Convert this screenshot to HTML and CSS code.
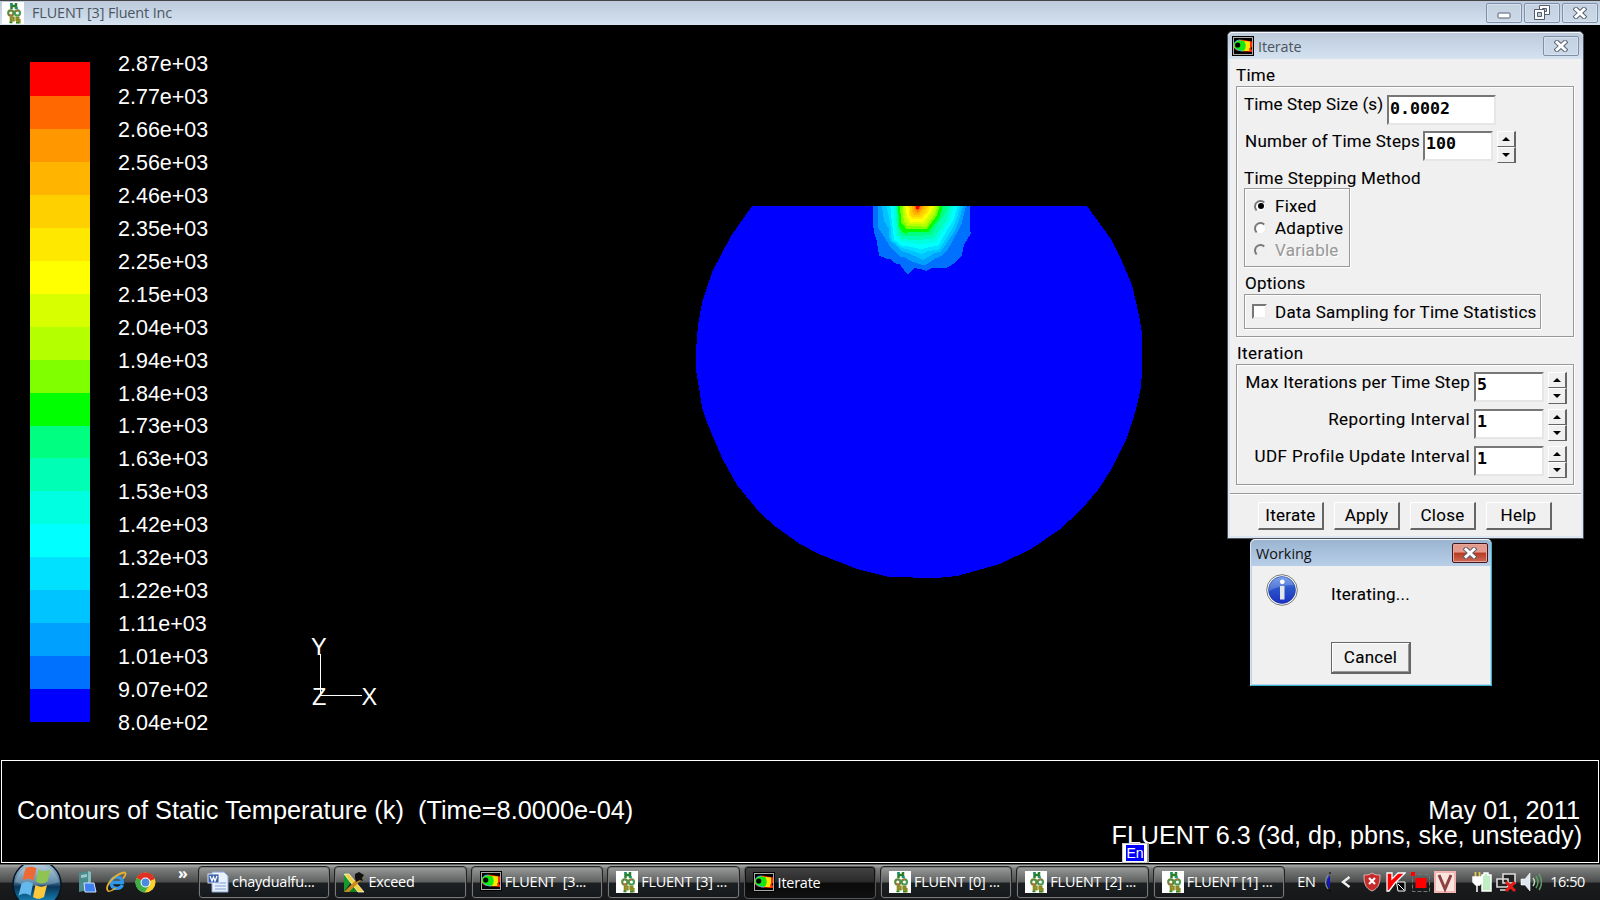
FILE: index.html
```html
<!DOCTYPE html>
<html lang="en">
<head>
<meta charset="utf-8">
<title>FLUENT [3] Fluent Inc</title>
<link rel="stylesheet" href="styles.css">
</head>
<body>
<svg class="defs" width="0" height="0" aria-hidden="true">
  <defs>
    <linearGradient id="orbTop" x1="0" y1="0" x2="0" y2="1"><stop offset="0" stop-color="#b9d3e4"/><stop offset=".45" stop-color="#3f6f92"/><stop offset=".55" stop-color="#0b3558"/><stop offset="1" stop-color="#19a6e0"/></linearGradient>
    <linearGradient id="infoFill" x1="0" y1="0" x2="0" y2="1"><stop offset="0" stop-color="#5a8be6"/><stop offset=".45" stop-color="#2a55c8"/><stop offset="1" stop-color="#1c2fc4"/></linearGradient>
    <symbol id="hoops" viewBox="0 0 22 22">
      <rect width="22" height="22" fill="#fff"/>
      <path d="M9.500 1v6M14 1v6M9.500 4h5" stroke="#2f7d2a" stroke-width="2.500" fill="none"/>
      <path d="M8 2.500h3M13 6h3" stroke="#159a8a" stroke-width="1.500"/>
      <ellipse cx="8.800" cy="11" rx="2.600" ry="2.600" fill="none" stroke="#5d8a3a" stroke-width="2.100"/>
      <ellipse cx="15.400" cy="11" rx="2.600" ry="2.600" fill="none" stroke="#4b9a50" stroke-width="2.100"/>
      <path d="M7 13l4 1M13.500 9l3-1" stroke="#b86a30" stroke-width="1.500"/>
      <path d="M8.800 21v-5.500h2.800v2.800H9M17.500 15.800h-3v2.200h3v2.400h-3.500" fill="none" stroke="#8a8a20" stroke-width="2.200"/>
      <path d="M7.500 20.500h3M14 20.500h3" stroke="#1c8d30" stroke-width="1.300"/>
    </symbol>
    <symbol id="fluent" viewBox="0 0 22 20">
      <rect width="22" height="20" fill="#000"/>
      <rect x="1.500" y="1.500" width="19" height="17" fill="#000" stroke="#aaa" stroke-width="1"/>
      <path d="M2 9C3 4 8 3.500 12 4l8 1.500V11l-1.500 1L20 14v2C14 15.500 7 16 4 14 2 13 2 11 2 9z" fill="#ff2a00"/>
      <path d="M2 9C3 4 8 4 12 5l6 .5V12l-1 .5.500 2.500C12 15 7 15 4 13 2 12 2 11 2 9z" fill="#ffe600"/>
      <path d="M2 9c1-4 6-4.500 10-4 2 2 2.500 7 0 9.500C7 14.500 2 13 2 9z" fill="#12e812"/>
      <path d="M2.500 7c1-2 3-3 6-3M3 12c2 2 5 3 8 3" fill="none" stroke="#00c8e8"/>
      <circle cx="5.700" cy="9" r="2.600" fill="#000"/>
    </symbol>
    <symbol id="cross" viewBox="0 0 14 12">
      <path d="M3 2.300l8 7.400M11 2.300l-8 7.400" stroke="#555d6c" stroke-width="4.800" stroke-linecap="square"/>
      <path d="M3 2.300l8 7.400M11 2.300l-8 7.400" stroke="#fff" stroke-width="2.900" stroke-linecap="square"/>
    </symbol>
  </defs>
</svg>

<header class="titlebar">
  <svg class="title-icon" width="22" height="22"><use href="#hoops"/></svg>
  <span class="title-text">FLUENT [3] Fluent Inc</span>
  <div class="caption-buttons">
    <span class="cap"><svg width="14" height="12" viewBox="0 0 14 12"><rect x="1" y="6" width="12" height="5" rx="1" fill="#fff" stroke="#555d6c"/></svg></span>
    <span class="cap"><svg width="16" height="15" viewBox="0 0 16 15"><path d="M5.500.5h10v9h-10z" fill="#fff" stroke="#555d6c"/><path d="M8.500 3.500h4v3h-4z" fill="#bcc9da" stroke="#555d6c"/><path d="M.5 4.500h10v10H.5z" fill="#fff" stroke="#555d6c"/><path d="M3.500 7.500h4v4h-4z" fill="#bcc9da" stroke="#555d6c"/></svg></span>
    <span class="cap"><svg width="14" height="12"><use href="#cross"/></svg></span>
  </div>
</header>

<main class="viewport">
  <section class="plot">
    <div class="scale">
      <i class="c20"></i><i class="c19"></i><i class="c18"></i><i class="c17"></i><i class="c16"></i><i class="c15"></i><i class="c14"></i><i class="c13"></i><i class="c12"></i><i class="c11"></i><i class="c10"></i><i class="c9"></i><i class="c8"></i><i class="c7"></i><i class="c6"></i><i class="c5"></i><i class="c4"></i><i class="c3"></i><i class="c2"></i><i class="c1"></i>
    </div>
    <div class="values">
      <span>2.87e+03</span><span>2.77e+03</span><span>2.66e+03</span><span>2.56e+03</span><span>2.46e+03</span><span>2.35e+03</span><span>2.25e+03</span><span>2.15e+03</span><span>2.04e+03</span><span>1.94e+03</span><span>1.84e+03</span><span>1.73e+03</span><span>1.63e+03</span><span>1.53e+03</span><span>1.42e+03</span><span>1.32e+03</span><span>1.22e+03</span><span>1.11e+03</span><span>1.01e+03</span><span>9.07e+02</span><span>8.04e+02</span>
    </div>
    <svg class="field" width="1300" height="735" viewBox="300 25 1300 735">
      <g shape-rendering="crispEdges">
        <polygon fill="#00f" points="752,206 1087,206 1111,239 1121,259 1132,285 1139,315 1142,333 1142,370 1141,388 1137,405 1133,420 1126,440 1111,470 1098,490 1081,510 1059,530 1031,549 1000,564 957,576 937,578 889,577 857,569 819,554 800,544 776,527 760,513 737,485 722,458 711,432 706,420 702,407 699,388 696,370 696,350 698,325 702,303 712,272 731,236"/>
        <g transform="translate(680 190) scale(.33333)">
          <polygon fill="#0070ff" points="579,48 580,112 583,130 590,150 595,185 598,197 620,206 632,208 646,220 658,222 684,255 703,235 720,236 740,243 755,234 800,233 820,222 845,198 852,165 873,130 869,115 869,48"/>
          <polygon fill="#00a0ff" points="594,48 594,112 625,160 628,168 658,199 678,203 690,212 728,225 738,224 765,206 785,197 805,176 830,130 845,100 858,48"/>
          <polygon fill="#00c4ff" points="606,48 612,92 627,118 629,150 640,160 662,182 686,190 730,210 762,190 782,185 820,130 835,98 849,48"/>
          <polygon fill="#00e0ff" points="619,48 631,100 635,150 660,172 690,180 725,192 745,183 778,178 812,125 828,92 841,48"/>
          <polygon fill="#0ff" points="631,48 636,100 642,148 664,166 690,170 725,178 745,172 776,166 800,122 820,92 833,48"/>
          <polygon fill="#00ffe0" points="641,48 643,110 650,143 665,156 700,160 724,163 770,155 795,112 810,92 822,48"/>
          <polygon fill="#00ffb4" points="648,48 650,110 655,136 668,148 718,150 764,145 785,110 800,90 812,48"/>
          <polygon fill="#00ff80" points="652,48 655,110 660,130 672,138 716,138 756,134 780,90 798,68 802,48"/>
          <polygon fill="#0f0" points="654,48 658,110 666,124 680,132 688,125 745,126 775,88 784,68 786,48"/>
          <polygon fill="#80ff00" points="660,48 664,98 680,117 740,117 770,78 779,48"/>
          <polygon fill="#b4ff00" points="668,48 671,92 682,108 738,110 764,74 773,48"/>
          <polygon fill="#d8ff00" points="672,48 676,84 686,103 734,103 757,72 767,48"/>
          <polygon fill="#ff0" points="678,48 680,80 692,96 730,96 750,70 760,48"/>
          <polygon fill="#ffe800" points="685,48 688,78 696,88 726,88 744,66 753,48"/>
          <polygon fill="#ffd000" points="690,48 691,72 698,82 722,82 738,64 745,48"/>
          <polygon fill="#ffb400" points="695,48 697,66 702,74 718,74 732,60 737,48"/>
          <polygon fill="#ff9800" points="700,48 702,62 707,68 716,68 727,54 730,48"/>
          <polygon fill="#ff6800" points="704,48 706,58 710,62 716,61 724,48"/>
          <polygon fill="#f00" points="708,48 708,56 717,56 719,48"/>
        </g>
        <path d="M320.500 654v41.500H362" fill="none" stroke="#fff"/>
      </g>
      <text class="axis" x="311" y="655">Y</text>
      <text class="axis" x="312" y="705">Z</text>
      <text class="axis" x="361.500" y="705">X</text>
    </svg>
  </section>
  <footer class="caption">
    <div class="caption-left">Contours of Static Temperature (k)&nbsp; (Time=8.0000e-04)</div>
    <div class="caption-right"><div class="date">May 01, 2011</div><div class="version">FLUENT 6.3 (3d, dp, pbns, ske, unsteady)</div></div>
  </footer>
</main>

<section class="window iterate">
  <div class="win-title">
    <svg width="22" height="20"><use href="#fluent"/></svg>
    <span class="title-text">Iterate</span>
    <span class="cap"><svg width="14" height="12"><use href="#cross"/></svg></span>
  </div>
  <div class="win-body">
    <div class="legend">Time</div>
    <div class="group time-group">
      <div class="row first"><label class="w-size">Time Step Size (s)</label><span class="input wide">0.0002</span></div>
      <div class="row"><label class="w-steps">Number of Time Steps</label><span class="input">100</span><span class="spin"><b></b><b></b></span></div>
      <div class="sub">Time Stepping Method</div>
      <div class="group radios">
        <div class="opt"><i class="radio on"></i><span>Fixed</span></div>
        <div class="opt"><i class="radio"></i><span>Adaptive</span></div>
        <div class="opt off"><i class="radio"></i><span>Variable</span></div>
      </div>
      <div class="sub options">Options</div>
      <div class="group checks"><i class="check"></i><span>Data Sampling for Time Statistics</span></div>
    </div>
    <div class="legend second">Iteration</div>
    <div class="group iter-group">
      <div class="row right"><label>Max Iterations per Time Step</label><span class="input">5</span><span class="spin"><b></b><b></b></span></div>
      <div class="row right"><label class="loose">Reporting Interval</label><span class="input">1</span><span class="spin"><b></b><b></b></span></div>
      <div class="row right"><label class="loose">UDF Profile Update Interval</label><span class="input">1</span><span class="spin"><b></b><b></b></span></div>
    </div>
    <div class="actions"><span class="btn">Iterate</span><span class="btn">Apply</span><span class="btn">Close</span><span class="btn">Help</span></div>
  </div>
</section>

<section class="window working">
  <div class="win-title">
    <span class="title-text">Working</span>
    <span class="cap red"><svg width="14" height="12"><use href="#cross"/></svg></span>
  </div>
  <div class="work-body">
    <svg width="32" height="32" viewBox="0 0 32 32"><circle cx="16" cy="16" r="15.300" fill="#fff" stroke="#777"/><circle cx="16" cy="16" r="13.500" fill="url(#infoFill)" stroke="#1a3a9c" stroke-width=".6"/><path d="M3 17a13 13 0 0 1 25-6C20 11 12 12 3 17z" fill="#fff" opacity=".2"/><circle cx="16.300" cy="7.800" r="2.400" fill="#fff"/><path d="M14 12h4.500v13.500H14z" fill="#e4e6ee"/></svg>
    <div class="work-main"><span>Iterating...</span><span class="btn default">Cancel</span></div>
  </div>
</section>

<span class="lang-badge"><b>En</b></span>

<nav class="taskbar">
  <svg class="orb" width="52" height="36" viewBox="0 0 52 36">
    <circle cx="26" cy="19.500" r="24" fill="url(#orbTop)" stroke="#0a1520" stroke-width="1.500"/>
    <path d="M4 17a22.500 22.500 0 0 1 44 0c-14 5-30 5-44 0z" fill="#fff" opacity=".22"/>
    <path d="M14.500 3c4-2 8-1.500 11 .3L22.500 15.500c-4-2.300-7-2.300-11 0z" fill="#ee6a35"/>
    <path d="M27.500 4.500c4 2.400 8 2.200 12-.5l-3 12.500c-4 2.500-7.500 2.500-11.500 0z" fill="#8fc452"/>
    <path d="M10.500 18.500c4-2.500 8-2.300 11.500.3l-2.500 12c-4-2.600-7.500-2.600-12 0z" fill="#63b8ec"/>
    <path d="M24.500 20c4 2.300 7.500 2.300 11.500 0l-3 12c-4 2.500-7.500 2.300-11 0z" fill="#fcc83c"/>
  </svg>
  <div class="quick">
    <svg width="20" height="24" viewBox="0 0 20 24"><path d="M2 3l9-2v19l-9 2z" fill="#4b8b8c"/><path d="M11 1l3 1v9l-3 10z" fill="#84bfc0"/><path d="M4 5l6-1v3l-6 1z" fill="#9ec9c8"/><path d="M7 13h10l2 9H8z" fill="#3f7ff0" stroke="#cfe2fa"/></svg>
    <svg width="22" height="22" viewBox="0 0 22 22"><path d="M7 11.500h10.500C17.500 4 6 4.500 6 11.500c0 7 9 7.500 11.500 2.500" fill="none" stroke="#2f96e8" stroke-width="3.300"/><path d="M3 20C-1 15 10 3 19 1.500c3 0 1 4-1 6" fill="none" stroke="#e8b030" stroke-width="1.800"/><path d="M3 20c2 1 5-1 8-3" fill="none" stroke="#e8b030" stroke-width="1.500"/></svg>
    <svg width="21" height="21" viewBox="0 0 21 21"><circle cx="10.500" cy="10.500" r="10" fill="#fbd12e"/><path d="M10.500 10.500L1.500 6A10 10 0 0 1 19.800 7z" fill="#df3024"/><path d="M10.500 10.500L1.500 6a10 10 0 0 0 8 14.500l4-6z" fill="#3fae49"/><circle cx="10.500" cy="10.500" r="4.900" fill="#fff"/><circle cx="10.500" cy="10.500" r="3.900" fill="#4b8ade"/></svg>
  </div>
  <span class="more">»</span>
  <div class="tasks">
    <div class="task"><svg width="22" height="22" viewBox="0 0 22 22"><path d="M5 1h12l4 4v16H5z" fill="#e8f0fb" stroke="#88a8d8"/><path d="M8 12h11M8 15h11M8 18h11" stroke="#7a9ed0"/><rect x="1" y="3" width="11" height="9" fill="#3a62b0" stroke="#fff" stroke-width=".8"/><path d="M3 5l2 5 1.500-4L8 10l2-5" fill="none" stroke="#fff" stroke-width="1.300"/></svg><span>chaydualfu...</span></div>
    <div class="task"><svg width="22" height="22" viewBox="0 0 22 22"><path d="M1 1l8 9-8 11z" fill="#159a2c"/><path d="M3 21h15l-7-8z" fill="#10841c"/><path d="M1 3h5l15 18h-6z" fill="#f4d03c" stroke="#fff" stroke-width=".7"/><path d="M17 5l3 2L6 21H1z" fill="#c88a20"/><path d="M12 3l4-2 5 3-2 3 1 3-3-1-4 2-1-4z" fill="#111"/></svg><span>Exceed</span></div>
    <div class="task"><svg class="raised" width="22" height="20"><use href="#fluent"/></svg><span>FLUENT&nbsp; [3...</span></div>
    <div class="task"><svg width="22" height="22"><use href="#hoops"/></svg><span>FLUENT [3] ...</span></div>
    <div class="task active"><svg class="raised" width="22" height="20"><use href="#fluent"/></svg><span>Iterate</span></div>
    <div class="task"><svg width="22" height="22"><use href="#hoops"/></svg><span>FLUENT [0] ...</span></div>
    <div class="task"><svg width="22" height="22"><use href="#hoops"/></svg><span>FLUENT [2] ...</span></div>
    <div class="task"><svg width="22" height="22"><use href="#hoops"/></svg><span>FLUENT [1] ...</span></div>
  </div>
  <div class="tray">
    <span class="lang">EN</span>
    <svg class="t-moon" width="7" height="20" viewBox="0 0 7 20"><path d="M6 3Q0 10 6 17z" fill="#1414c4"/><path d="M4 3Q-1 10 4 17" fill="none" stroke="#7890a8" stroke-width="1.200"/><path d="M6 0v2M6 18v2" stroke="#000"/></svg>
    <svg class="t-arrow" width="11" height="12" viewBox="0 0 11 12"><path d="M9.500 1L3 6l6.500 5" fill="none" stroke="#eee" stroke-width="2.400"/></svg>
    <svg class="t-shield" width="18" height="20" viewBox="0 0 18 20"><path d="M9 1c3 2 5 2 8 2 0 8-1 13-8 16C2 16 1 11 1 3c3 0 5 0 8-2z" fill="#c62a2a" stroke="#d9b0b0"/><path d="M6 6l6 6M12 6l-6 6" stroke="#fff" stroke-width="2.200"/></svg>
    <svg class="t-k" width="20" height="20" viewBox="0 0 20 20"><path d="M1 1h5v6l6-6h7l-9 9-1 1-6 8H1z" fill="#f00" stroke="#fff" stroke-width="1.300"/><path d="M10.500 10h8.500v9h-7z" fill="#000" stroke="#fff" stroke-width="1"/><path d="M12 12l6 6" stroke="#fff" fill="none"/></svg>
    <svg class="t-red" width="20" height="22" viewBox="0 0 20 22"><path d="M1.500 3.500h17v17h-17z" fill="none" stroke="#777" stroke-dasharray="4 2"/><path d="M4.500 7h11v10h-11zM0 1h4v4H0z" fill="#f00"/></svg>
    <svg class="t-v" width="22" height="22" viewBox="0 0 22 22"><rect width="22" height="22" fill="#f3b4b4"/><rect x="2" y="2" width="18" height="18" fill="#fae4e0"/><path d="M5 4l6 14 6-14" fill="none" stroke="#8d4040" stroke-width="3"/></svg>
    <svg class="t-plug" width="20" height="22" viewBox="0 0 20 22"><path d="M12 2h4v2h3v16h-9V4h2z" fill="#bfeec4" stroke="#fff" stroke-width="1.500"/><path d="M3.500 1v6M7.500 1v6" stroke="#e8c848" stroke-width="1.800"/><path d="M1 6h9v5l-2.500 3H4L1 11zM5 14v7" fill="#fff" stroke="#fff" stroke-width="1.500"/></svg>
    <svg class="t-net" width="21" height="22" viewBox="0 0 21 22"><path d="M7 3h12v9H7zM1 8h11v8H1zM4 19h7" fill="#222" stroke="#ddd" stroke-width="1.600"/><path d="M10 11l9 9M19 11l-9 9" stroke="#e81818" stroke-width="3"/></svg>
    <svg class="t-vol" width="22" height="20" viewBox="0 0 22 20"><path d="M1 7h4l5-6v18l-5-6H1z" fill="#dfe7ee" stroke="#fff" stroke-width=".6"/><path d="M13 6q3 4 0 8" fill="none" stroke="#b8d8b8" stroke-width="1.500"/><path d="M16 4q4 6 0 12M19 2q5 8 0 16" fill="none" stroke="#5f9a68" stroke-width="1.500"/></svg>
    <span class="clock">16:50</span>
  </div>
</nav>
</body>
</html>
```
FILE: styles.css
```css
* { box-sizing: border-box; }
body {
  margin: 0;
  width: 1600px;
  height: 900px;
  overflow: hidden;
  display: flex;
  flex-direction: column;
  background: #000;
  position: relative;
  font-family: "Open Sans", "Noto Sans", sans-serif;
  white-space: nowrap;
}
.defs { position: absolute; }
svg { display: block; flex: none; }

.titlebar {
  height: 25px;
  flex: none;
  display: flex;
  align-items: center;
  padding: 0 2px;
  border-top: 1px solid #444;
  background: linear-gradient(#bccadb, #d5e2f0);
}
.title-text { font-size: 14.4px; line-height: 20px; color: #4a5560; letter-spacing: -.13px; }
.titlebar .title-text { margin-left: 8px; }
.caption-buttons { margin: -1px 0 0 auto; display: flex; gap: 2px; }
.cap {
  width: 36px;
  height: 20px;
  display: flex;
  align-items: center;
  justify-content: center;
  border: 1px solid #8190a8;
  border-radius: 2px;
  background: linear-gradient(#c4d1e1, #ccd9e8);
  box-shadow: inset 0 0 0 1px #d6e1ee;
}
.cap.red {
  background: linear-gradient(#e39a8c 0 45%, #b83a22 50%, #cc6a55);
  border-color: #43151c;
  box-shadow: inset 0 0 0 1px #e5a79b;
}

.viewport { flex: 1; display: flex; flex-direction: column; color: #fff; font-family: "Liberation Sans", Arial, sans-serif; }
.plot { height: 735px; display: flex; position: relative; padding: 37px 0 0 30px; }
.scale { width: 60px; height: 660px; display: flex; flex-direction: column; }
.scale i { flex: 1; }
.scale .c20 { flex: 0 0 34px; background: #f00; }
.c19 { background: #ff6800; } .c18 { background: #ff9800; } .c17 { background: #ffb400; }
.c16 { background: #ffd000; } .c15 { background: #ffe800; } .c14 { background: #ff0; }
.c13 { background: #d8ff00; } .c12 { background: #b4ff00; } .c11 { background: #80ff00; }
.c10 { background: #0f0; } .c9 { background: #00ff80; } .c8 { background: #00ffb4; }
.c7 { background: #00ffe0; } .c6 { background: #0ff; } .c5 { background: #00e0ff; }
.c4 { background: #00c4ff; } .c3 { background: #00a0ff; } .c2 { background: #0070ff; }
.c1 { background: #00f; }
.values { margin: -14px 0 0 28px; display: flex; flex-direction: column; font-size: 21.5px; }
.values span { height: 32.96px; line-height: 33px; }
.field { position: absolute; left: 300px; top: 0; }
.axis { font: 23.5px "Liberation Sans", Arial, sans-serif; fill: #fff; }

.caption {
  height: 103px;
  margin: 0 1px;
  border: 1px solid #fff;
  display: flex;
  justify-content: space-between;
  padding: 37px 16px 0 15px;
  font-size: 25.35px;
  line-height: 25px;
}
.caption-right { text-align: right; }
.date { padding-right: 2px; }
.version { font-size: 25.15px; }

.window { position: absolute; background: #f0f0f0; border: 1px solid #4b5058; border-radius: 5px 5px 0 0; box-shadow: inset 0 0 0 2px #dce7f3; font-family: "Roboto", sans-serif; color: #000; }
.win-title { display: flex; align-items: center; border-radius: 5px 5px 0 0; font-family: "Open Sans", "Noto Sans", sans-serif; }
.win-title .cap { margin-left: auto; }
.win-title .title-text { padding-top: 1px; }
.iterate { left: 1227px; top: 31px; width: 357px; height: 508px; }
.iterate .win-title { height: 27px; padding: 0 4px; border-top: 1px solid #f6f9fc; background: linear-gradient(#bccadb, #d5e2f0); }
.iterate .title-text { margin-left: 4px; }
.win-body { padding: 6px 2px 0; font-size: 17px; line-height: 20px; letter-spacing: .26px; -webkit-text-stroke: .1px; }
.legend { height: 21px; margin-left: 6px; }
.group { border: 1px solid #999; box-shadow: 1px 1px 0 #fff, inset 1px 1px 0 #fff; }
.time-group { margin-left: 6px; width: 338px; height: 251px; padding: 8px 0 0 7px; }
.row { display: flex; height: 37px; align-items: flex-start; }
.row.first { height: 36px; }
.row.first label { margin-top: -1px; letter-spacing: .12px; }
.w-size { width: 143px; }
.w-steps { width: 179px; padding-left: 1px; }
.input {
  width: 70px;
  height: 30px;
  padding: 1px 1px;
  background: #fff;
  border: 2px solid;
  border-color: #777 #e6e6e6 #e6e6e6 #777;
  font: bold 16.6px/20px "DejaVu Sans Mono", monospace;
  letter-spacing: 0;
  -webkit-text-stroke: 0;
}
.input.wide { width: 109px; padding-top: 2px; }
.spin { width: 19px; margin-left: 4px; display: flex; flex-direction: column; }
.spin b { height: 16px; border: 1px solid; border-color: #fff #666 #666 #fff; border-right-width: 2px; display: flex; align-items: center; justify-content: center; }
.spin b::after { content: ""; border: 4px solid transparent; border-top: 0; border-bottom: 4px solid #000; }
.spin b + b::after { border-bottom: 0; border-top: 4px solid #000; }
.sub { height: 20px; }
.radios { width: 106px; height: 79px; padding: 6px 0 0 9px; }
.opt { display: flex; align-items: center; height: 22px; gap: 8px; }
.opt.off { color: #999; text-shadow: 1px 1px 0 #fff; }
.radio { width: 13px; height: 13px; border-radius: 50%; background: #fff; border: 2px solid; border-color: #777 #eee #eee #777; display: flex; align-items: center; justify-content: center; }
.radio.on::after { content: ""; width: 6px; height: 6px; border-radius: 50%; background: #000; }
.off .radio { background: #f0f0f0; }
.options { margin-top: 6px; height: 21px; padding-left: 1px; }
.checks { width: 297px; height: 35px; display: flex; align-items: center; padding-left: 7px; gap: 8px; }
.check { width: 15px; height: 15px; background: #fff; border: 2px solid; border-color: #777 #eee #eee #777; }
.legend.second { margin-top: 6px; height: 21px; padding-left: 1px; letter-spacing: .45px; }
.iter-group { margin-left: 6px; width: 338px; height: 121px; padding: 7px 6px 0 0; }
.row.right { justify-content: flex-end; }
.row.right label { margin-right: 4px; }
.row .loose { letter-spacing: .45px; }
.actions { margin-top: 8px; padding-top: 8px; border-top: 1px solid #999; box-shadow: inset 0 1px 0 #fff; display: flex; gap: 10px; padding-left: 28px; }
.btn { width: 66px; height: 28px; line-height: 24px; text-align: center; border: 1px solid; border-color: #fff #666 #666 #fff; border-right-width: 2px; border-bottom-width: 2px; }

.working { left: 1250px; top: 539px; width: 242px; height: 147px; border: 1px solid #35b7cf; border-top-color: #eef6fb; border-left-color: #d0e4f2; box-shadow: inset 0 0 0 1px #bcd3ea; }
.working .win-title { height: 26px; padding: 0 3px 0 5px; background: linear-gradient(#9ab4d1, #b9cfe8); }
.working .title-text { color: #111; letter-spacing: 0; }
.work-body { display: flex; padding: 8px 0 0 15px; font-size: 17px; letter-spacing: .26px; -webkit-text-stroke: .1px; }
.work-main { display: flex; flex-direction: column; margin: 10px 0 0 33px; line-height: 20px; }
.btn.default { width: 80px; height: 32px; line-height: 28px; margin-top: 38px; border: 1px solid #666; border-right-width: 2px; border-bottom-width: 2px; box-shadow: inset 1px 1px 0 #fff, inset -1px -1px 0 #999; }

.lang-badge { position: absolute; left: 1122px; top: 843px; width: 27px; height: 20px; background: #fff; border: 1px solid #ccc; border-right: 2px solid #999; padding: 1px 3px; z-index: 2; }
.lang-badge b { display: block; height: 16px; background: #00f; color: #fff; font: 14px/16px "Liberation Sans", sans-serif; text-align: center; }

.taskbar { height: 36px; flex: none; display: flex; align-items: center; border-top: 1px solid #5a5a5a; background: linear-gradient(#a9aba9 0, #7b7d7c 10%, #4c4e4e 48%, #1a1c1d 52%, #151718); color: #fff; font-size: 14.4px; }
.orb { margin-left: 11px; }
.quick { display: flex; align-items: center; gap: 8px; margin: -1px 0 0 14px; }
.more { margin: -19px 0 0 22px; width: 20px; font-weight: bold; font-size: 16px; line-height: 20px; }
.tasks { display: flex; gap: 4px; }
.task {
  width: 132.400px;
  height: 33px;
  display: flex;
  align-items: center;
  gap: 3px;
  padding: 0 0 2px 8px;
  border: 1px solid #222;
  border-radius: 4px;
  box-shadow: inset 0 0 0 1px #77797a;
  background: linear-gradient(#9a9c9b 0, #5f6161 48%, #1d2022 52%, #16191b);
  letter-spacing: -.2px;
}
.raised { margin-top: -2px; }
.task.active { background: linear-gradient(#444 0, #2a2a2a 48%, #0a0a0a 52%, #101010); box-shadow: inset 0 0 0 1px #111; border-color: #555; padding-bottom: 0; }
.tray { display: flex; align-items: center; margin-top: -2px; }
.lang { margin-left: 12px; width: 20px; margin-right: 7px; }
.t-arrow { margin-left: 9px; }
.t-shield { margin-left: 12px; }
.t-k { margin-left: 5px; }
.t-red { margin-left: 5px; }
.t-v { margin-left: 3px; }
.t-plug { margin-left: 16px; }
.t-net { margin-left: 4px; }
.t-vol { margin-left: 3px; }
.clock { margin-left: 8px; letter-spacing: -.4px; }
```
